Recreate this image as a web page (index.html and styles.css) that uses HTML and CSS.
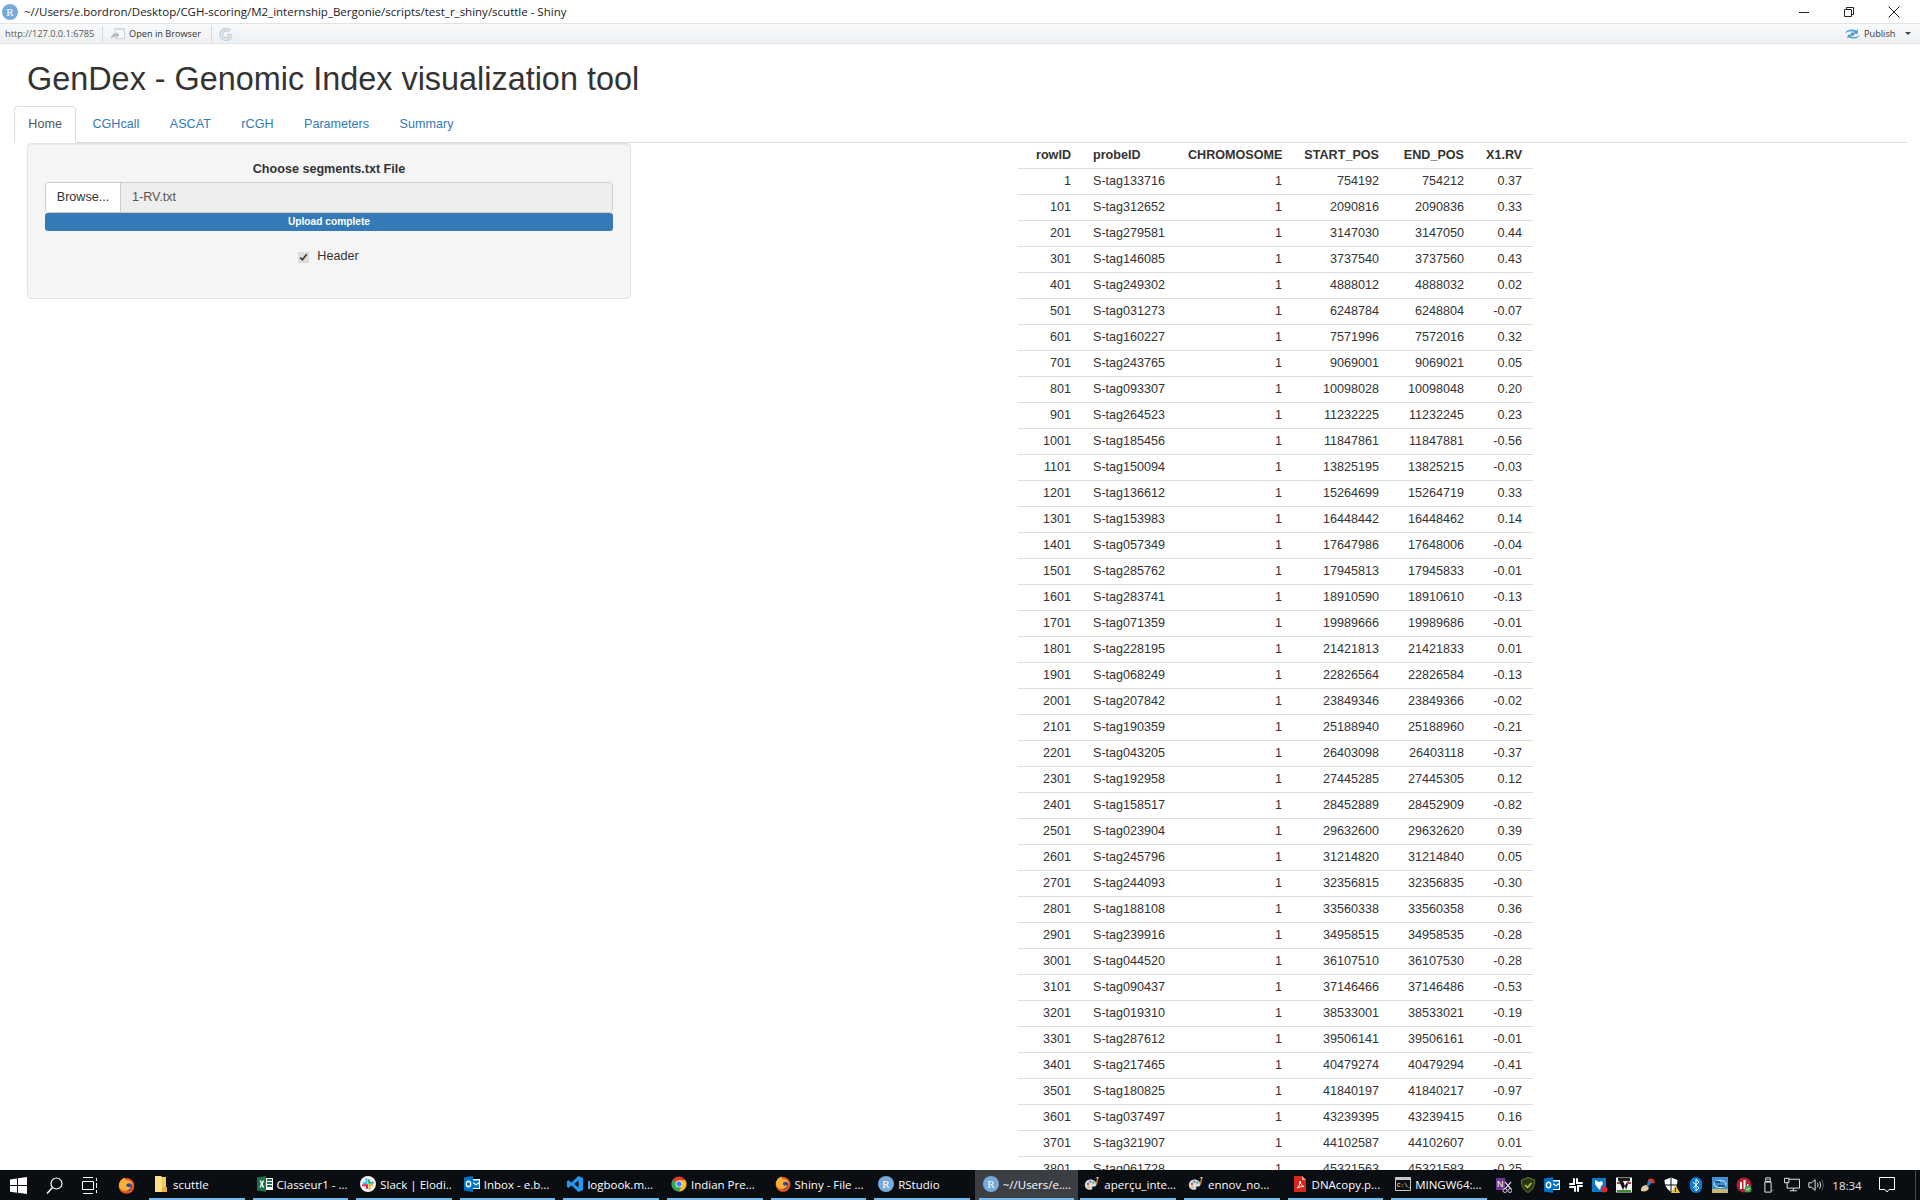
FILE: index.html
```html
<!DOCTYPE html>
<html lang="en">
<head>
  <meta charset="UTF-8" />
  <title>GenDex - Genomic Index visualization tool</title>
  <link rel="stylesheet" href="styles.css">
</head>
<body>

  <!-- shared icons -->
  <svg class="icon-defs">
    <symbol id="i-r" viewBox="0 0 16 16"><circle cx="8" cy="8" r="8" fill="#75aadb"/><text x="8" y="12" text-anchor="middle" font-family="Liberation Serif, serif" font-size="11" fill="#fff">R</text></symbol>
    <symbol id="i-firefox" viewBox="0 0 16 16"><circle cx="8" cy="8.400" r="7.400" fill="#e8561c"/><circle cx="8.600" cy="8.800" r="4.400" fill="#3d3f9e"/><path d="M1 8c0-4 3-7 6-7.400C6 2 7 3 8.500 3c3 0 5.500 2.500 6 5.500-1-2-3-3-5-2.500-2 .5-2 2-1 3 1.500 1 3 .5 4 0-1 3-4 4.500-6.500 4C3 12.500 1 10.500 1 8z" fill="#fbb03b"/></symbol>
    <symbol id="i-folder" viewBox="0 0 16 16"><path d="M2 0h6l1 1v15H2z" fill="#fbe08a"/><path d="M9 1h4v15H9z" fill="#f4c95d"/><path d="M9 11h5v5H9z" fill="#e5b13f"/></symbol>
    <symbol id="i-excel" viewBox="0 0 16 16"><path d="M6 2h10v12H6z" fill="#fff"/><path d="M10 3h5v2h-5zM10 6h5v2h-5zM10 9h5v2h-5z" fill="#1e7145"/><path d="M0 1.500 9 0v16L0 14.500z" fill="#1e7145"/><path d="M2.500 4.500h1.700L4.800 7l.8-2.500h1.600L5.700 8l1.600 3.500H5.600L4.800 9l-.8 2.500H2.400L4 8z" fill="#fff"/></symbol>
    <symbol id="i-slack" viewBox="0 0 16 16"><circle cx="8" cy="8" r="8" fill="#f4f4f4"/><path d="M6.500 3v4H3.800" stroke="#36c5f0" stroke-width="2" fill="none" stroke-linecap="round"/><path d="M13 6.800H9V4" stroke="#2eb67d" stroke-width="2" fill="none" stroke-linecap="round"/><path d="M9.500 13V9h2.800" stroke="#ecb22e" stroke-width="2" fill="none" stroke-linecap="round"/><path d="M3 9.200h4V12" stroke="#e01e5a" stroke-width="2" fill="none" stroke-linecap="round"/></symbol>
    <symbol id="i-outlook" viewBox="0 0 16 16"><path d="M8 3h8v10H8z" fill="#fff"/><path d="M9 4.500h6v1.500l-3 2-3-2z" fill="#0072c6"/><path d="M9 7.500l3 2 3-2V12H9z" fill="#0072c6"/><path d="M0 1.500 9 0v16L0 14.500z" fill="#0072c6"/><ellipse cx="4.500" cy="8" rx="2.200" ry="2.800" fill="none" stroke="#fff" stroke-width="1.400"/></symbol>
    <symbol id="i-vscode" viewBox="0 0 16 16"><path d="M11.500 0 16 2v12l-4.500 2-7-6.500-3 2.300L0 11V5l1.500-.8 3 2.300z" fill="#1f9cf0"/><path d="M11.500 4.500 7 8l4.500 3.500z" fill="#0a0d12"/></symbol>
    <symbol id="i-chrome" viewBox="0 0 16 16"><circle cx="8" cy="8" r="7.500" fill="#e33b2e"/><path d="M8 8 1.500 4.300A7.500 7.500 0 0 0 8 15.500l3.700-6.400z" fill="#2da94f"/><path d="M8 8l3.700 1.100L8 15.500A7.500 7.500 0 0 0 14.500 4.300H8z" fill="#fbc116"/><circle cx="8" cy="8" r="3.600" fill="#fff"/><circle cx="8" cy="8" r="2.700" fill="#4285f4"/></symbol>
    <symbol id="i-palette" viewBox="0 0 18 16"><path d="M1 9c0-3.500 3-6 6.500-6S14 5.500 14 8.500c0 2-1.500 2.500-3 2.300-1.500-.2-2 .5-1.700 1.600.3 1.200-.6 2-2.300 2C3.500 14.400 1 12.500 1 9z" fill="#d6dde6"/><circle cx="4.500" cy="8" r="1.300" fill="#d9453b"/><circle cx="7" cy="5.500" r="1.300" fill="#3f8ad8"/><circle cx="10.500" cy="6.500" r="1.300" fill="#49a84c"/><circle cx="5" cy="11.300" r="1.300" fill="#e9b62f"/><path d="M13.200 8 14.500 1.500h1.600L15 8.500z" fill="#c57a2b"/><path d="M14.200 0h2.200l-.3 1.800h-1.900z" fill="#eee"/></symbol>
    <symbol id="i-pdf" viewBox="0 0 16 16"><path d="M2 0h8l4 4v12H2z" fill="#d9261c"/><path d="M10 0l4 4h-4z" fill="#f3a59f"/><path d="M5 12c2-1.500 3-4 3-7 .5 3 2 5 4 5.500-2.500 0-5 .5-7 1.500z" fill="none" stroke="#fff" stroke-width="1"/></symbol>
    <symbol id="i-term" viewBox="0 0 16 16"><path d="M.5 1.500h15v13H.5z" fill="#111" stroke="#c8c8c8"/><path d="M1 2h14v2H1z" fill="#c8c8c8"/><text x="2" y="11" font-family="Liberation Mono, monospace" font-size="6" fill="#fff">C:\_</text></symbol>
  </svg>

  <div class="title-bar">
    <svg class="title-icon"><use href="#i-r"/></svg>
    <span class="title-text">~//Users/e.bordron/Desktop/CGH-scoring/M2_internship_Bergonie/scripts/test_r_shiny/scuttle - Shiny</span>
    <div class="win-controls">
      <svg class="win-btn" viewBox="0 0 12 12"><path d="M1 6.500h10" stroke="#222" fill="none"/></svg>
      <svg class="win-btn" viewBox="0 0 12 12"><path d="M1.500 3.500h7v7h-7zM3.500 3.500v-2h7v7h-2" stroke="#222" fill="none"/></svg>
      <svg class="win-btn" viewBox="0 0 12 12"><path d="M.5.5l11 11M11.500.5l-11 11" stroke="#222" fill="none"/></svg>
    </div>
  </div>

  <div class="tool-bar">
    <span class="tool-url">http://127.0.0.1:6785</span>
    <span class="tool-sep"></span>
    <svg class="tool-open" viewBox="0 0 16 14"><path d="M5.500 1.500h10v11h-10z" fill="#fdfdfd" stroke="#c5ced6"/><path d="M5.500 1.500h10v2h-10z" fill="#d5dde4"/><path d="M1 13c0-4 2-6 6-6V5l3 3.500L7 12v-2c-3 0-4 1-6 3z" fill="#aebcc8"/></svg>
    <span class="tool-open-text">Open in Browser</span>
    <span class="tool-sep"></span>
    <svg class="tool-refresh" viewBox="0 0 14 14"><path d="M11.500 3.500A6 6 0 1 0 13 8.500" fill="none" stroke="#c3d0da" stroke-width="1.500"/><path d="M10 5.200A3.600 3.600 0 1 0 10.500 8.500" fill="none" stroke="#c3d0da" stroke-width="1.500"/><path d="M8 7h5v1.500H8z" fill="#c3d0da"/></svg>
    <svg class="publish-icon" viewBox="0 0 16 12"><path d="M0 5.500C2 1 8 0 12 2.500L14 1l-.5 5-5-.5 2-1.500C7.500 2.500 3.500 3 0 5.500zM16 7c-2 4-8 5-12 2.500L2.500 11l.5-4.500 4.500.5-1.700 1.500C9 10 12.500 9.500 16 7z" fill="#4a9ad4"/><circle cx="8" cy="6" r="2" fill="#4a9ad4"/></svg>
    <span class="publish-text">Publish</span>
    <span class="publish-caret"></span>
  </div>

  <div class="page">
    <h1 class="app-title">GenDex - Genomic Index visualization tool</h1>

    <ul class="tabs">
      <li class="tab active">Home</li>
      <li class="tab">CGHcall</li>
      <li class="tab">ASCAT</li>
      <li class="tab">rCGH</li>
      <li class="tab">Parameters</li>
      <li class="tab">Summary</li>
    </ul>

    <div class="content">
      <div class="well">
        <div class="well-label">Choose segments.txt File</div>
        <div class="file-input">
          <span class="browse-btn">Browse...</span>
          <span class="file-name">1-RV.txt</span>
        </div>
        <div class="progress-bar">Upload complete</div>
        <label class="check-row">
          <input type="checkbox" class="check-box" checked>
          <span>Header</span>
        </label>
      </div>

      <table class="data-table">
        <colgroup>
          <col class="col-row"><col class="col-probe"><col class="col-chrom"><col class="col-start"><col class="col-end"><col class="col-rv">
        </colgroup>
        <thead>
          <tr><th>rowID</th><th class="left">probeID</th><th>CHROMOSOME</th><th>START_POS</th><th>END_POS</th><th>X1.RV</th></tr>
        </thead>
        <tbody>
          <tr><td>1</td><td class="left">S-tag133716</td><td>1</td><td>754192</td><td>754212</td><td>0.37</td></tr>
          <tr><td>101</td><td class="left">S-tag312652</td><td>1</td><td>2090816</td><td>2090836</td><td>0.33</td></tr>
          <tr><td>201</td><td class="left">S-tag279581</td><td>1</td><td>3147030</td><td>3147050</td><td>0.44</td></tr>
          <tr><td>301</td><td class="left">S-tag146085</td><td>1</td><td>3737540</td><td>3737560</td><td>0.43</td></tr>
          <tr><td>401</td><td class="left">S-tag249302</td><td>1</td><td>4888012</td><td>4888032</td><td>0.02</td></tr>
          <tr><td>501</td><td class="left">S-tag031273</td><td>1</td><td>6248784</td><td>6248804</td><td>-0.07</td></tr>
          <tr><td>601</td><td class="left">S-tag160227</td><td>1</td><td>7571996</td><td>7572016</td><td>0.32</td></tr>
          <tr><td>701</td><td class="left">S-tag243765</td><td>1</td><td>9069001</td><td>9069021</td><td>0.05</td></tr>
          <tr><td>801</td><td class="left">S-tag093307</td><td>1</td><td>10098028</td><td>10098048</td><td>0.20</td></tr>
          <tr><td>901</td><td class="left">S-tag264523</td><td>1</td><td>11232225</td><td>11232245</td><td>0.23</td></tr>
          <tr><td>1001</td><td class="left">S-tag185456</td><td>1</td><td>11847861</td><td>11847881</td><td>-0.56</td></tr>
          <tr><td>1101</td><td class="left">S-tag150094</td><td>1</td><td>13825195</td><td>13825215</td><td>-0.03</td></tr>
          <tr><td>1201</td><td class="left">S-tag136612</td><td>1</td><td>15264699</td><td>15264719</td><td>0.33</td></tr>
          <tr><td>1301</td><td class="left">S-tag153983</td><td>1</td><td>16448442</td><td>16448462</td><td>0.14</td></tr>
          <tr><td>1401</td><td class="left">S-tag057349</td><td>1</td><td>17647986</td><td>17648006</td><td>-0.04</td></tr>
          <tr><td>1501</td><td class="left">S-tag285762</td><td>1</td><td>17945813</td><td>17945833</td><td>-0.01</td></tr>
          <tr><td>1601</td><td class="left">S-tag283741</td><td>1</td><td>18910590</td><td>18910610</td><td>-0.13</td></tr>
          <tr><td>1701</td><td class="left">S-tag071359</td><td>1</td><td>19989666</td><td>19989686</td><td>-0.01</td></tr>
          <tr><td>1801</td><td class="left">S-tag228195</td><td>1</td><td>21421813</td><td>21421833</td><td>0.01</td></tr>
          <tr><td>1901</td><td class="left">S-tag068249</td><td>1</td><td>22826564</td><td>22826584</td><td>-0.13</td></tr>
          <tr><td>2001</td><td class="left">S-tag207842</td><td>1</td><td>23849346</td><td>23849366</td><td>-0.02</td></tr>
          <tr><td>2101</td><td class="left">S-tag190359</td><td>1</td><td>25188940</td><td>25188960</td><td>-0.21</td></tr>
          <tr><td>2201</td><td class="left">S-tag043205</td><td>1</td><td>26403098</td><td>26403118</td><td>-0.37</td></tr>
          <tr><td>2301</td><td class="left">S-tag192958</td><td>1</td><td>27445285</td><td>27445305</td><td>0.12</td></tr>
          <tr><td>2401</td><td class="left">S-tag158517</td><td>1</td><td>28452889</td><td>28452909</td><td>-0.82</td></tr>
          <tr><td>2501</td><td class="left">S-tag023904</td><td>1</td><td>29632600</td><td>29632620</td><td>0.39</td></tr>
          <tr><td>2601</td><td class="left">S-tag245796</td><td>1</td><td>31214820</td><td>31214840</td><td>0.05</td></tr>
          <tr><td>2701</td><td class="left">S-tag244093</td><td>1</td><td>32356815</td><td>32356835</td><td>-0.30</td></tr>
          <tr><td>2801</td><td class="left">S-tag188108</td><td>1</td><td>33560338</td><td>33560358</td><td>0.36</td></tr>
          <tr><td>2901</td><td class="left">S-tag239916</td><td>1</td><td>34958515</td><td>34958535</td><td>-0.28</td></tr>
          <tr><td>3001</td><td class="left">S-tag044520</td><td>1</td><td>36107510</td><td>36107530</td><td>-0.28</td></tr>
          <tr><td>3101</td><td class="left">S-tag090437</td><td>1</td><td>37146466</td><td>37146486</td><td>-0.53</td></tr>
          <tr><td>3201</td><td class="left">S-tag019310</td><td>1</td><td>38533001</td><td>38533021</td><td>-0.19</td></tr>
          <tr><td>3301</td><td class="left">S-tag287612</td><td>1</td><td>39506141</td><td>39506161</td><td>-0.01</td></tr>
          <tr><td>3401</td><td class="left">S-tag217465</td><td>1</td><td>40479274</td><td>40479294</td><td>-0.41</td></tr>
          <tr><td>3501</td><td class="left">S-tag180825</td><td>1</td><td>41840197</td><td>41840217</td><td>-0.97</td></tr>
          <tr><td>3601</td><td class="left">S-tag037497</td><td>1</td><td>43239395</td><td>43239415</td><td>0.16</td></tr>
          <tr><td>3701</td><td class="left">S-tag321907</td><td>1</td><td>44102587</td><td>44102607</td><td>0.01</td></tr>
          <tr><td>3801</td><td class="left">S-tag061728</td><td>1</td><td>45321563</td><td>45321583</td><td>-0.25</td></tr>
        </tbody>
      </table>
    </div>
  </div>

  <!-- windows taskbar -->
  <div class="taskbar">
    <div class="sys-btn">
      <svg class="sys-icon" viewBox="0 0 17 17"><path d="M0 2.400 7 1.400v6.700H0zM8 1.200 17 0v8.100H8zM0 9h7v6.700l-7-1zM8 9h9v8l-9-1.200z" fill="#fff"/></svg>
    </div>
    <div class="sys-btn">
      <svg class="sys-icon" viewBox="0 0 17 17"><circle cx="10.500" cy="6.500" r="5.500" fill="none" stroke="#fff" stroke-width="1.200"/><path d="M6.500 10.500 1 16.500" stroke="#fff" stroke-width="1.400"/></svg>
    </div>
    <div class="sys-btn">
      <svg class="sys-icon" viewBox="0 0 17 17"><path d="M.5 4.500h11v8H.5z" fill="none" stroke="#fff"/><path d="M1 .5h10M1 16.500h10M14.500 1v3M14.500 6v5M14.500 13v3" stroke="#fff" fill="none"/></svg>
    </div>
    <div class="sys-btn sys-btn-ff">
      <svg class="sys-icon"><use href="#i-firefox"/></svg>
    </div>

    <div class="task"><div class="task-in"><svg class="task-icon"><use href="#i-folder"/></svg><span class="task-label">scuttle</span></div></div>
    <div class="task"><div class="task-in"><svg class="task-icon"><use href="#i-excel"/></svg><span class="task-label">Classeur1 - ...</span></div></div>
    <div class="task"><div class="task-in"><svg class="task-icon"><use href="#i-slack"/></svg><span class="task-label">Slack | Elodi...</span></div></div>
    <div class="task"><div class="task-in"><svg class="task-icon"><use href="#i-outlook"/></svg><span class="task-label">Inbox - e.b...</span></div></div>
    <div class="task"><div class="task-in"><svg class="task-icon"><use href="#i-vscode"/></svg><span class="task-label">logbook.m...</span></div></div>
    <div class="task"><div class="task-in"><svg class="task-icon"><use href="#i-chrome"/></svg><span class="task-label">Indian Pre...</span></div></div>
    <div class="task"><div class="task-in"><svg class="task-icon"><use href="#i-firefox"/></svg><span class="task-label">Shiny - File ...</span></div></div>
    <div class="task"><div class="task-in"><svg class="task-icon"><use href="#i-r"/></svg><span class="task-label">RStudio</span></div></div>
    <div class="task current"><div class="task-in"><svg class="task-icon"><use href="#i-r"/></svg><span class="task-label">~//Users/e....</span></div></div>
    <div class="task"><div class="task-in"><svg class="task-icon"><use href="#i-palette"/></svg><span class="task-label">aperçu_inte...</span></div></div>
    <div class="task"><div class="task-in"><svg class="task-icon"><use href="#i-palette"/></svg><span class="task-label">ennov_no...</span></div></div>
    <div class="task"><div class="task-in"><svg class="task-icon"><use href="#i-pdf"/></svg><span class="task-label">DNAcopy.p...</span></div></div>
    <div class="task"><div class="task-in"><svg class="task-icon"><use href="#i-term"/></svg><span class="task-label">MINGW64:...</span></div></div>

    <div class="tray">
      <div class="tray-item"><svg viewBox="0 0 16 16"><path d="M0 1h9v12H0z" fill="#6e3b8f"/><text x="1" y="10" font-family="Liberation Sans, sans-serif" font-size="9" fill="#fff">N</text><path d="M9 5l6 7M15 5l-6 7" stroke="#d8cbe4" stroke-width="1.200"/><circle cx="9" cy="13.500" r="2" fill="none" stroke="#d8cbe4"/><circle cx="14" cy="13.500" r="2" fill="none" stroke="#d8cbe4"/></svg></div>
      <div class="tray-item"><svg viewBox="0 0 16 16"><path d="M8 .5 14.500 3c0 6-1.500 10-6.500 12.500C3 13 1.500 9 1.500 3z" fill="#2c3316" stroke="#6f7f2a"/><path d="M5 8l2.500 2.500L11.500 6" fill="none" stroke="#b9d13a" stroke-width="1.500"/></svg></div>
      <div class="tray-item"><svg viewBox="0 0 16 16"><use href="#i-outlook"/></svg></div>
      <div class="tray-item"><svg viewBox="0 0 16 16"><path d="M6 2v5H2M14 6H9V2M10 14V9h4M2 10h5v4" fill="none" stroke="#fff" stroke-width="2" stroke-linecap="round"/></svg></div>
      <div class="tray-item"><svg viewBox="0 0 16 16"><path d="M0 1h14v14H0z" fill="#0f7ac4"/><path d="M3 3l4 2 3-1 1 3-2 2-1 4-3-3-2-3z" fill="#fff"/><circle cx="12.500" cy="12.500" r="3" fill="#e3232b"/></svg></div>
      <div class="tray-item"><svg viewBox="0 0 16 16"><path d="M0 .5h16v15H0z" fill="#f4f4f4"/><path d="M2 1h12v3H2z" fill="#1c1c1c"/><path d="M3 4l4 9 2-4 1 4 3-9-2 1-2 4-2-5z" fill="#111"/><path d="M1 13h14v2H1z" fill="#3c8d2f"/><path d="M11 5h4v2h-4zM1 5h3v2H1z" fill="#b33a3a"/></svg></div>
      <div class="tray-item"><svg viewBox="0 0 16 16"><path d="M8 3c3-3 7-1 7 3l-4 .5C10 5 8.500 5 7.500 6z" fill="#d9361f"/><path d="M9 3 6 9l2 1 4-5z" fill="#2d7ec4"/><path d="M1 12c1-3 3-4 5-4l3 3c-1 3-4 4-8 3z" fill="#e4c9a0"/></svg></div>
      <div class="tray-item"><svg viewBox="0 0 16 16"><path d="M7 .5 13.500 3c0 5-1.500 9-6.500 12C2.500 12 .5 8 .5 3z" fill="#fff"/><path d="M7 .5V8H.7M7 8h6.300M7 8v7" stroke="#0a0d12" fill="none"/><path d="M11.500 8 16 16H7z" fill="#f4c430"/><path d="M11 11h1v2.500h-1zM11 14h1v1h-1z" fill="#111"/></svg></div>
      <div class="tray-item"><svg viewBox="0 0 16 16"><rect x="2" y="0" width="12" height="16" rx="6" fill="#0a7bd6"/><path d="M5 5l6 6-3 3V2l3 3-6 6" fill="none" stroke="#fff"/></svg></div>
      <div class="tray-item"><svg viewBox="0 0 16 16"><path d="M0 0h16v16H0z" fill="#3f8fd2"/><path d="M0 12h16v4H0z" fill="#c7b76a"/><ellipse cx="8" cy="7" rx="6" ry="3.500" fill="none" stroke="#dff0fb"/><path d="M3 5h5M6 9h7" stroke="#0b3f73" stroke-width="1.400"/></svg></div>
      <div class="tray-item"><svg viewBox="0 0 16 16"><circle cx="8" cy="8" r="7.500" fill="#b81f32"/><path d="M4 5h2v7H4zM7.500 3h2v9h-2zM11 7h1.500v5H11z" fill="#fff"/><circle cx="12" cy="12" r="3.500" fill="#3aa655"/><path d="M10.500 12l1 1 2-2" fill="none" stroke="#fff"/></svg></div>
      <div class="tray-item"><svg viewBox="0 0 16 18"><path d="M4.500 5.500h7V17h-7zM5.500 1h5v4.500h-5z" fill="none" stroke="#fff"/><path d="M7 3h.8M8.500 3h.8" stroke="#fff"/><path d="M12 16l2-1.500" stroke="#9a9a9a"/></svg></div>
      <div class="tray-item"><svg viewBox="0 0 18 16"><path d="M3.500 1.500h14v10h-14z" fill="none" stroke="#fff"/><path d="M.5.500h5v5h-5z" fill="#0a0d12" stroke="#fff"/><path d="M10.500 11.500v3M6.500 14.500h8" stroke="#fff" fill="none"/></svg></div>
      <div class="tray-item"><svg viewBox="0 0 18 16"><path d="M1 5.500h3L8 2v12l-4-3.500H1z" fill="none" stroke="#fff"/><path d="M10.500 5.500c1 1.500 1 3.500 0 5M13 4c1.500 2.500 1.500 5.500 0 8" fill="none" stroke="#fff"/><path d="M15.500 2c2 3.500 2 8.500 0 12" fill="none" stroke="#666"/></svg></div>
      <div class="tray-clock">18:34</div>
      <div class="tray-notify">
        <svg class="notify-icon" viewBox="0 0 16 16"><path d="M.5 .5h15v12H10L8 15l-2-2.500H.5z" fill="none" stroke="#fff"/></svg>
      </div>
      <div class="show-desktop"></div>
    </div>
  </div>

</body>
</html>
```

FILE: styles.css
```css
* {
  box-sizing: border-box;
}

html, body {
  height: 100%;
}

body {
  margin: 0;
  width: 1920px;
  height: 1200px;
  display: flex;
  flex-direction: column;
  overflow: hidden;
  background-color: #fff;
  color: #333;
  font-family: "Liberation Sans", Arial, sans-serif;
  font-size: 12.6px;
}

.icon-defs {
  display: none;
}

/* window title */
.title-bar {
  height: 24px;
  flex-shrink: 0;
  display: flex;
  align-items: center;
  padding-left: 2px;
  border-bottom: 1px solid #e2e2e2;
  font-family: "Open Sans", sans-serif;
  font-size: 11.5px;
  color: #1a1a1a;
}

.title-icon {
  width: 16px;
  height: 16px;
  margin-right: 6px;
}

.win-controls {
  margin-left: auto;
  display: flex;
  gap: 33px;
  padding-right: 20px;
}

.win-btn {
  width: 12px;
  height: 12px;
}

/* rstudio viewer toolbar */
.tool-bar {
  height: 20px;
  flex-shrink: 0;
  display: flex;
  align-items: center;
  padding-left: 5px;
  background: linear-gradient(#f9fafb, #edf0f2);
  border-bottom: 1px solid #e3e5e7;
  font-family: "Open Sans", sans-serif;
  font-size: 9.2px;
  color: #333;
}

.tool-url {
  width: 97px;
  color: #555;
}

.tool-sep {
  width: 1px;
  height: 16px;
  background-color: #d5d9dc;
}

.tool-open {
  width: 15px;
  height: 13px;
  margin: 0 4px 0 7px;
}

.tool-open-text {
  width: 82px;
}

.tool-refresh {
  width: 14px;
  height: 14px;
  margin-left: 7px;
}

.publish-icon {
  width: 15px;
  height: 12px;
  margin-left: auto;
  margin-right: 4px;
}

.publish-text {
  width: 41px;
}

.publish-caret {
  width: 0;
  height: 0;
  margin-right: 9px;
  border-left: 3px solid transparent;
  border-right: 3px solid transparent;
  border-top: 3px solid #444;
}

/* shiny page */
.page {
  flex: 1;
  min-height: 0;
  overflow: hidden;
  padding: 0 13px 0 14px;
}

.app-title {
  margin: 17px 0 9px 13px;
  font-size: 32.4px;
  font-weight: 400;
  line-height: 36px;
}

.tabs {
  display: flex;
  list-style: none;
  margin: 0;
  padding: 0;
  height: 37px;
  border-bottom: 1px solid #ddd;
}

.tab {
  height: 37px;
  padding: 8px 13.350px;
  margin-right: 1.800px;
  line-height: 18px;
  color: #337ab7;
  border: 1px solid transparent;
}

.tab.active {
  color: #555;
  background-color: #fff;
  border-color: #ddd #ddd #fff;
  border-radius: 4px 4px 0 0;
}

.content {
  display: grid;
  grid-template-columns: 604px 515px;
  column-gap: 387px;
  align-items: start;
  padding-left: 13px;
}

.well {
  height: 156px;
  padding: 16px 17px;
  background-color: #f5f5f5;
  border: 1px solid #e3e3e3;
  border-radius: 4px;
  box-shadow: inset 0 1px 1px rgba(0,0,0,0.05);
}

.well-label {
  height: 18px;
  margin-bottom: 4px;
  line-height: 18px;
  font-weight: 700;
  text-align: center;
}

.file-input {
  display: flex;
  height: 31px;
  border: 1px solid #ccc;
  border-radius: 4px;
  overflow: hidden;
}

.browse-btn {
  width: 75px;
  line-height: 28px;
  text-align: center;
  background-color: #fff;
  border-right: 1px solid #ccc;
}

.file-name {
  flex: 1;
  padding-left: 11px;
  line-height: 29px;
  color: #555;
  background-color: #eee;
}

.progress-bar {
  height: 18px;
  line-height: 17px;
  text-align: center;
  color: #fff;
  font-size: 10.2px;
  font-weight: 700;
  background-color: #337ab7;
  border-radius: 3px;
}

.check-row {
  display: flex;
  justify-content: center;
  align-items: center;
  gap: 8px;
  margin-top: 18px;
  padding-right: 1px;
}

.check-box {
  width: 11px;
  height: 11px;
  margin: 2px 0 0;
  accent-color: #dedede;
}

/* table */
.data-table {
  width: 515px;
  table-layout: fixed;
  border-collapse: collapse;
  background-color: #fff;
}

.col-row { width: 64px; }
.col-probe { width: 95px; }
.col-chrom { width: 116px; }
.col-start { width: 97px; }
.col-end { width: 85px; }
.col-rv { width: 58px; }

.data-table th,
.data-table td {
  padding: 0 11px;
  text-align: right;
  white-space: nowrap;
}

.data-table th {
  height: 25px;
  font-weight: 700;
  border-bottom: 1px solid #ddd;
}

.data-table td {
  height: 26px;
  border-bottom: 1px solid #ddd;
}

.data-table .left {
  text-align: left;
}

/* windows taskbar */
.taskbar {
  height: 30px;
  flex-shrink: 0;
  display: flex;
  background-color: #0a0d12;
  color: #fff;
  font-family: "Open Sans", sans-serif;
  font-size: 11.5px;
}

.sys-btn {
  width: 36px;
  display: flex;
  align-items: center;
  justify-content: center;
}

.sys-btn-ff {
  width: 37px;
}

.sys-icon {
  width: 17px;
  height: 17px;
}

.task {
  width: 103.600px;
  flex-shrink: 0;
  padding: 0 4px;
}

.task.current {
  margin: 0 -2px 0 1px;
  background-color: #3b3e43;
}

.task-in {
  height: 30px;
  display: flex;
  align-items: center;
  padding-left: 4px;
  border-bottom: 2px solid #76b9ed;
  overflow: hidden;
}

.task-icon {
  width: 16px;
  height: 16px;
  flex-shrink: 0;
  margin-right: 4px;
}

.task-label {
  white-space: nowrap;
}

.tray {
  margin-left: auto;
  display: flex;
  align-items: center;
}

.tray-item {
  width: 24px;
  display: flex;
  justify-content: center;
}

.tray-item svg {
  width: 16px;
  height: 16px;
}

.tray-clock {
  width: 38px;
  text-align: center;
  color: #e8e8e8;
}

.tray-notify {
  width: 42px;
  display: flex;
  justify-content: center;
}

.notify-icon {
  width: 16px;
  height: 16px;
}

.show-desktop {
  width: 8px;
  height: 30px;
  border-right: 1px solid #4a4d52;
  margin-right: 4px;
}
```
